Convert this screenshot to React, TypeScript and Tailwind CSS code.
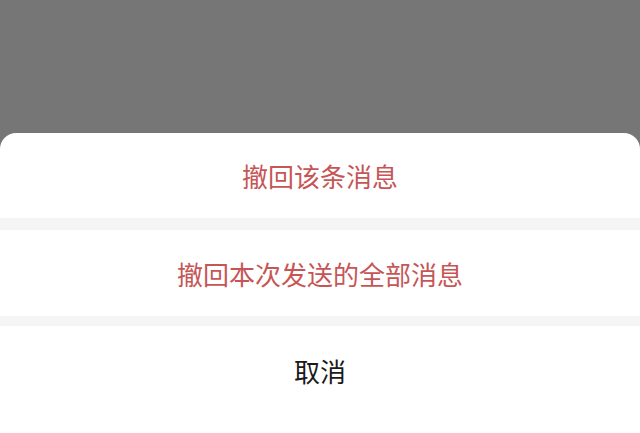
export default function App() {
  return (
    <div
      className="flex h-[433px] w-[640px] flex-col overflow-hidden bg-[#767676]"
      style={{ fontFamily: '"Noto Sans CJK SC", "Noto Sans", sans-serif' }}
    >
      <div className="h-[133px] shrink-0" />
      <div className="flex flex-1 flex-col overflow-hidden rounded-t-[16px] bg-white">
        <button className="flex h-[85px] shrink-0 items-center justify-center text-[26px] text-[#c65656]">
          撤回该条消息
        </button>
        <div className="h-[12px] shrink-0 bg-[#f5f5f5]" />
        <button className="flex h-[86px] shrink-0 items-center justify-center text-[26px] text-[#c65656]">
          撤回本次发送的全部消息
        </button>
        <div className="h-[10px] shrink-0 bg-[#f5f5f5]" />
        <button className="flex h-[88px] shrink-0 items-center justify-center text-[26px] text-[#1a1a1a]">
          取消
        </button>
      </div>
    </div>
  )
}
